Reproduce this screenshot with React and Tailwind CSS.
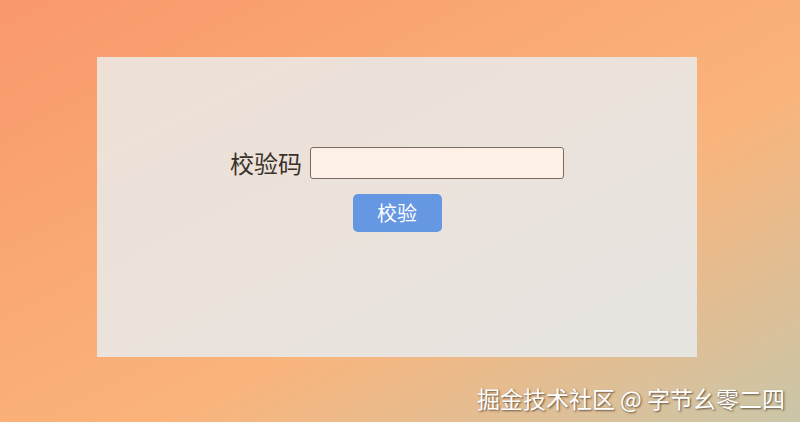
export default function App() {
  return (
    <div className="relative w-[800px] h-[422px] overflow-hidden bg-linear-to-br from-[#f9986b] via-[#fab47b] via-60% to-[#c9c6a8] font-['Noto_Sans_CJK_SC',sans-serif]">
      <div className="pt-[57px] pl-[97px]">
        <div className="w-[600px] h-[300px] bg-linear-to-br from-[#eee0d6] to-[#e7e5e1] flex flex-col items-center pt-[90px]">
          <div className="flex items-center gap-[8px]">
            <label className="text-[24px] leading-[32px] text-[#3b312b]">校验码</label>
            <input
              type="text"
              className="w-[254px] h-[32px] rounded-[3px] border border-[#7b6c63] bg-[#fdf0e6] outline-none px-2"
            />
          </div>
          <button className="mt-[15px] w-[89px] h-[38px] rounded-[5px] bg-[#6697e2] text-white text-[20px] leading-none">
            校验
          </button>
        </div>
      </div>
      <div className="absolute right-[15px] bottom-[9px] text-[23px] leading-[30px] text-white [text-shadow:1px_1px_2px_rgba(60,40,30,0.75)]">
        掘金技术社区 @ 字节幺零二四
      </div>
    </div>
  );
}
